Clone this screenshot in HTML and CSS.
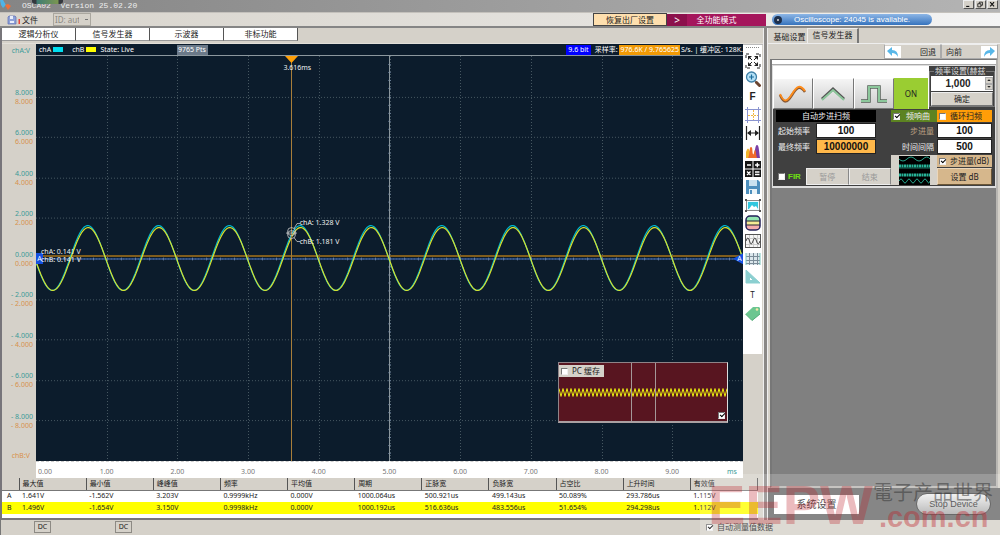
FILE: index.html
```html
<!DOCTYPE html>
<html lang="zh-CN">
<head>
<meta charset="UTF-8">
<meta name="viewport" content="width=device-width, initial-scale=1.0">
<title>OSCA02 Version 25.02.20</title>
<link rel="stylesheet" href="styles.css">
</head>
<body>
<div class="app">

<header class="titlebar">
    <svg class="logo" viewBox="0 0 12 11"><path d="M0 0h3l3 5-3 3-2-3z" fill="#4fb4e8"/><path d="M5 5l3-1 3 2-3 4z" fill="#f0703a"/></svg>
    <h1>OSCA02 &nbsp;Version 25.02.20</h1>
    <span class="notch"></span>
    <div class="win-buttons">
        <button aria-label="Minimize"><svg viewBox="0 0 10 9"><path d="M2 7h4" stroke="#111" stroke-width="1.5"/></svg></button>
        <button aria-label="Restore"><svg viewBox="0 0 10 9"><path d="M3.500 3.500v-2h4v4h-2M1.500 3.500h4v4h-4z" fill="none" stroke="#111"/></svg></button>
        <button aria-label="Close"><svg viewBox="0 0 10 9"><path d="M2 1.500l5 5.500M7 1.500L2 7" stroke="#111" stroke-width="1.500"/></svg></button>
    </div>
</header>

<nav class="menubar">
    <button class="file-menu"><svg viewBox="0 0 14 10"><path d="M2 1h6l1 1v7H1V2z" fill="#8fa2d8" stroke="#5b6fb5" stroke-width=".7"/><path d="M3 1h3v3H3zM3 6h4v2H3z" fill="#e8edfb"/><path d="M11.500 4h1.500v5h-1.500z" fill="#e8443c"/></svg>文件</button>
    <select class="device-id" aria-label="Device ID" disabled><option>ID: auto</option></select>
    <button class="reset">恢复出厂设置</button>
    <button class="mode"><span class="mode-arrow">&gt;</span><span class="mode-text">全功能模式</span></button>
    <div class="notice"><span class="notice-dot"></span>Oscilloscope: 24045 is available.</div>
</nav>

<main class="workspace">
<section class="left">
    <div class="view-tabs">
        <button>逻辑分析仪</button>
        <button>信号发生器</button>
        <button>示波器</button>
        <button>非标功能</button>
    </div>

    <div class="scope">
        <div class="y-axis">
            <span class="unit-a">chA:V</span>
            <div class="y-labels">
                <div class="edge"></div>
                <div class="tick"><span>8.000</span><span>8.000</span></div>
                <div class="tick"><span>6.000</span><span>6.000</span></div>
                <div class="tick"><span>4.000</span><span>4.000</span></div>
                <div class="tick"><span>2.000</span><span>2.000</span></div>
                <div class="tick"><span>0.000</span><span>0.000</span></div>
                <div class="tick"><span>- 2.000</span><span>- 2.000</span></div>
                <div class="tick"><span>- 4.000</span><span>- 4.000</span></div>
                <div class="tick"><span>- 6.000</span><span>- 6.000</span></div>
                <div class="tick"><span>- 8.000</span><span>- 8.000</span></div>
                <div class="edge unit-b">chB:V</div>
            </div>
        </div>

        <div class="chart">
            <div class="chart-head">
                <span>chA</span><i class="swatch cyan"></i>
                <span class="ch-b">chB</span><i class="swatch yellow"></i>
                <span>State: Live</span>
                <span class="points">9765 Pts</span>
                <span class="bits">9.6 bit</span>
                <span>采样率:</span>
                <span class="rate">976.6K / 9.765625</span>
                <span>S/s. | 缓冲区: 128K.</span>
            </div>
            <div class="plot">
                <svg class="plot-svg" viewBox="0 0 707 406" preserveAspectRatio="none">
                    <g id="grid"></g>
                    <path d="M0 200.500H707" class="level-b"/>
                    <path d="M0 203.500H707" class="level-a"/>
                    <path id="axisTicks" class="axis-ticks"/>
                    <path d="M353.500 0V406" class="mid"/>
                    <path id="waveA" class="wave wave-a"/>
                    <path id="waveB" class="wave wave-b"/>
                    <path d="M255.500 0V406" class="cursor"/>
                    <path d="M249 0h13l-6.500 7z" fill="#ffa008"/>
                    <g class="probe">
                        <circle cx="255.500" cy="176" r="4"/><circle cx="255.500" cy="179" r="4"/>
                        <path d="M250 177.500h11M258 173l3-5h3M258 182l3 4h3"/>
                    </g>
                </svg>
                <span class="note cursor-time">3.616ms</span>
                <span class="note probe-a">chA: 1.328 V</span>
                <span class="note probe-b">chB: 1.181 V</span>
                <span class="marker marker-left">A</span>
                <span class="marker marker-right">A</span>
                <span class="note level-text-a">chA: 0.141 V</span>
                <span class="note level-text-b">chB: 0.141 V</span>
                <div class="buffer">
                    <svg viewBox="0 0 168 59" preserveAspectRatio="none">
                        <path id="bufferWave" class="buffer-wave"/>
                        <path d="M72.500 0v59M96.500 0v59" stroke="#a59a9a"/>
                    </svg>
                    <label class="buffer-label"><input type="checkbox">PC 缓存</label>
                    <input type="checkbox" class="buffer-show" aria-label="Show buffer" checked>
                </div>
            </div>
            <div class="x-axis">
                <span class="first">0.00</span><span>1.00</span><span>2.00</span><span>3.00</span><span>4.00</span><span>5.00</span><span>6.00</span><span>7.00</span><span>8.00</span><span>9.00</span><span class="last">ms</span>
            </div>
        </div>

        <aside class="tools">
            <div class="tool-list">
                <i class="grip"></i>
                <button aria-label="Fit"><svg viewBox="0 0 16 16"><path d="M1 5V1h4M11 1h4v4M15 11v4h-4M5 15H1v-4" fill="none" stroke="#222" stroke-dasharray="3 1"/><path d="M3 3l10 10M13 3L3 13" stroke="#222"/><path d="M3 3h4L3 7zM13 3v4L9 3zM13 13H9l4-4zM3 13V9l4 4z" fill="#222"/><circle cx="8" cy="8" r="1.500" fill="#fff"/></svg></button>
                <button aria-label="Zoom"><svg viewBox="0 0 16 16"><path d="M10 10l2 2" stroke="#888" stroke-width="2"/><path d="M11.500 11.500l3 3" stroke="#6b4430" stroke-width="3" stroke-linecap="round"/><circle cx="6.500" cy="6" r="5" fill="#b5e1f7" stroke="#3e7fa6" stroke-width="1.300"/><path d="M4 6h5M6.500 3.500v5" stroke="#1b6c9c" stroke-width="1.200"/></svg></button>
                <button class="letter bold">F</button>
                <button aria-label="Cursors"><svg viewBox="0 0 16 16"><path d="M2.500 0v16M13.500 0v16M0 2.500h16M0 13.500h16" stroke="#8a94d0"/><path d="M8.500 3v10M3 8.500h10" stroke="#f0b840" stroke-dasharray="2 1"/></svg></button>
                <button aria-label="Width"><svg viewBox="0 0 16 16"><path d="M1.500 1v14M14.500 1v14M3 8h10" stroke="#222" stroke-width="1.200"/><path d="M2 8l4-3v6zM14 8l-4-3v6z" fill="#222"/></svg></button>
                <button aria-label="Spectrum"><svg viewBox="0 0 16 16"><path d="M1 15V9q2-7 4 0v6z" fill="#f0b52c"/><path d="M9 15C10 9 10 2 12 2s2 6 3 13z" fill="#7b3fa5"/><path d="M3 15c2-3 1-11 3-11s1 5 2 7 1-4 2-4 1 5 2 8z" fill="#ef6a2b"/></svg></button>
                <button aria-label="Math"><svg viewBox="0 0 16 16"><path d="M0 0h7.500v7.500H0zM8.500 0H16v7.500H8.500zM0 8.500h7.500V16H0zM8.500 8.500H16V16H8.500z" fill="#151515"/><path d="M2 4h4M10 4h4.500M12.300 1.700v4.500M2 10.500l3.500 3.500M5.500 10.500L2 14M10 11h4.500M10 13.500h4.500" stroke="#fff" stroke-width="1.300"/></svg></button>
                <button aria-label="Save"><svg viewBox="0 0 16 16"><path d="M1 1h12l2 2v12H1z" fill="#4d8fbd"/><path d="M4 1h8v6H4z" fill="#c9e2f0"/><path d="M4 10h8v5H4z" fill="#e8f3f8"/><path d="M5 11h2v4H5z" fill="#4d8fbd"/></svg></button>
                <button aria-label="Picture"><svg viewBox="0 0 16 16"><path d="M1.500 3.500h13v10h-13z" fill="#e9fbff" stroke="#888"/><path d="M3 5h10v7H3z" fill="#30c7df"/><path d="M4 12l3-4 2 2 2-1 2 3z" fill="#fff"/><path d="M0 2h2v2H0zM14 2h2v2h-2zM0 13h2v2H0zM14 13h2v2h-2z" fill="#555"/></svg></button>
                <button aria-label="Colours"><svg viewBox="0 0 16 16"><path d="M1 5q0-4 4-4h6q4 0 4 4v1H1z" fill="#95e5b2"/><path d="M1 6h14v4H1z" fill="#f5eb94"/><path d="M1 10h14v1q0 4-4 4H5q-4 0-4-4z" fill="#f5acac"/><path d="M1 6h14M1 10h14" stroke="#223"/><rect x="1" y="1" width="14" height="14" rx="4" fill="none" stroke="#232158" stroke-width="1.500"/></svg></button>
                <button aria-label="Wave"><svg viewBox="0 0 16 16"><rect x=".5" y="1.500" width="15" height="13" fill="#f5f5f5" stroke="#555"/><path d="M4.500 2v12M8.500 2v12M12.500 2v12M1 5.500h14M1 11.500h14" stroke="#ccc"/><path d="M1 8q2-6 3.500 0t3.500 0 3.500 0 3.500 0" fill="none" stroke="#444"/></svg></button>
                <button aria-label="Table"><svg viewBox="0 0 16 16"><path d="M1 2h14v12H1z" fill="#dce7ec"/><path d="M4.500 2v12M8.500 2v12M12.500 2v12M1 5.500h14M1 9.500h14M1 12.500h14" stroke="#7b8c98"/><path d="M1 2v12M15 2v12" stroke="#79c5bd"/></svg></button>
                <button aria-label="Triangle"><svg viewBox="0 0 16 16"><path d="M1 1v13h14zM4.500 7.500v4h4z" fill="#8bcfd0" fill-rule="evenodd" stroke="#8bcfd0"/></svg></button>
                <button class="letter">T</button>
                <button aria-label="Tag"><svg viewBox="0 0 16 16"><path d="M8 2h6l1 1v6l-7 6-1 .500L.500 9z" fill="#6cc690"/><path d="M.500 9L7 15.500l8-6.500" fill="none" stroke="#55ad79"/><circle cx="12" cy="4.500" r="1.300" fill="#f2e7a8"/></svg></button>
            </div>
        </aside>
    </div>

    <div class="measure-wrap">
        <table class="measure">
            <thead>
                <tr><th class="ch"></th><th>最大值</th><th>最小值</th><th>峰峰值</th><th>频率</th><th>平均值</th><th>周期</th><th>正脉宽</th><th>负脉宽</th><th>占空比</th><th>上升时间</th><th>有效值</th></tr>
            </thead>
            <tbody>
                <tr><td>A</td><td>1.641V</td><td>-1.562V</td><td>3.203V</td><td>0.9999kHz</td><td>0.000V</td><td>1000.064us</td><td>500.921us</td><td>499.143us</td><td>50.089%</td><td>293.786us</td><td>1.115V</td></tr>
                <tr class="row-b"><td>B</td><td>1.496V</td><td>-1.654V</td><td>3.150V</td><td>0.9998kHz</td><td>0.000V</td><td>1000.192us</td><td>516.636us</td><td>483.556us</td><td>51.654%</td><td>294.298us</td><td>1.112V</td></tr>
            </tbody>
        </table>
    </div>
</section>

<section class="right">
    <div class="side-tabs">
        <button>基础设置</button>
        <button class="active">信号发生器</button>
    </div>
    <div class="history">
        <button><svg viewBox="0 0 16 12"><path d="M2 5l5-4v3q6 0 6 7-2-4-6-4v3z" fill="#58b7e8"/></svg><span>回退</span></button>
        <button><span>向前</span><svg viewBox="0 0 16 12"><path d="M14 5L9 1v3q-6 0-6 7 2-4 6-4v3z" fill="#58b7e8"/></svg></button>
    </div>

    <div class="side-body">
        <div class="strip"></div>
        <div class="generator">
            <div class="wave-row">
                <div class="wave-buttons">
                    <button aria-label="Sine"><svg viewBox="0 0 30 22"><path d="M2 12c4 9 7 8 12 0s8-10 13-3" fill="none" stroke="#8a5a35" stroke-width="2.500"/><path d="M2 11c4 9 7 8 12 0s8-10 13-3" fill="none" stroke="#ff8c1a" stroke-width="1.800"/></svg></button>
                    <button aria-label="Triangle"><svg viewBox="0 0 30 22"><path d="M4 16L15 6l11 10" fill="none" stroke="#555" stroke-width="3"/><path d="M4 17L15 7l11 10" fill="none" stroke="#8cc79b" stroke-width="2"/></svg></button>
                    <button aria-label="Square"><svg viewBox="0 0 30 22"><path d="M2 18h8V4h10v14h8" fill="none" stroke="#556058" stroke-width="3.500"/><path d="M2 18h8V4h10v14h8" fill="none" stroke="#8cc79b" stroke-width="2"/></svg></button>
                    <button class="on">ON</button>
                </div>
                <div class="freq-wrap">
                    <fieldset class="freq">
                        <legend>频率设置(赫兹</legend>
                        <div class="spin">
                            <input type="text" value="1,000" aria-label="频率设置(赫兹">
                            <div class="spin-buttons"><button aria-label="Up"><i class="up"></i></button><button aria-label="Down"><i class="down"></i></button></div>
                        </div>
                        <button class="ok">确定</button>
                    </fieldset>
                </div>
            </div>

            <div class="sweep">
                <span class="sweep-title">自动步进扫频</span>
                <label class="response"><input type="checkbox" checked>频响曲</label>
                <label class="loop"><input type="checkbox">循环扫频</label>

                <label for="startFreq">起始频率</label>
                <input type="text" id="startFreq" class="num" value="100">
                <label for="stepSize" class="step-label">步进量</label>
                <input type="text" id="stepSize" class="num" value="100">

                <label for="endFreq">最终频率</label>
                <input type="text" id="endFreq" class="num amber" value="10000000">
                <label for="interval" class="interval-label">时间间隔</label>
                <input type="text" id="interval" class="num" value="500">

                <label class="fir"><input type="checkbox">FIR</label>
                <div class="run"><button disabled>暂停</button><button disabled>结束</button></div>
                <button class="thumb" aria-label="Response curve">
                    <svg viewBox="0 0 31 29"><path d="M0 0h31v29H0z" fill="#000"/><path d="M0 3q4 4 8 0t8 0 8 0 7 0M0 25q2-4 4 0t4 0 4 0 4 0 4 0 4 0 4 0 3 0" fill="none" stroke="#27a58c"/><path d="M0 10h31M0 19h31" stroke="#27b397" stroke-width="3" stroke-dasharray="2 .5"/><path d="M0 12h31" stroke="#1a7767"/></svg>
                </button>
                <label class="step-db"><input type="checkbox" checked>步进量(dB)</label>
                <button class="set-db">设置 dB</button>
            </div>
        </div>
    </div>

    <div class="actions">
        <button class="system">系统设置</button>
        <button class="stop">Stop Device</button>
    </div>
</section>
</main>

<footer class="status">
    <button>DC</button>
    <button>DC</button>
    <label><input type="checkbox" checked>自动测量值数据</label>
</footer>

<div class="brand">
    <span class="brand-name">EEPW</span>
    <div class="brand-side"><span class="brand-cn">電子产品世界</span><span class="brand-url">.com.cn</span></div>
</div>

</div>
<script src="script.js"></script>
</body>
</html>
```

FILE: styles.css
```css
* {
    box-sizing: border-box;
}
body {
    margin: 0;
    background-color: #d5d1c9;
    color: #222;
    font-family: "Noto Sans", "Noto Sans CJK SC", sans-serif;
    font-size: 8px;
    line-height: 10px;
}
button, input, select {
    margin: 0;
    padding: 0;
    border: none;
    border-radius: 0;
    color: inherit;
    font: inherit;
}
button {
    white-space: nowrap;
}
svg {
    display: block;
}
input[type="checkbox"] {
    appearance: none;
    position: relative;
    flex: none;
    width: 7px;
    height: 7px;
    border: 1px solid #777;
    border-right-color: #eee;
    border-bottom-color: #eee;
    background-color: #fff;
}
input[type="checkbox"]:checked::after {
    content: "";
    position: absolute;
    left: 1px;
    top: 0;
    width: 4px;
    height: 2px;
    border-left: 1px solid #000;
    border-bottom: 1px solid #000;
    transform: rotate(-45deg);
}
.app {
    position: relative;
    display: flex;
    flex-direction: column;
    min-height: 100vh;
    overflow: hidden;
}

/* title and menu */
.titlebar {
    position: relative;
    display: flex;
    height: 12px;
    background: linear-gradient(90deg, #858585, #b4b4b4);
}
.logo {
    width: 12px;
    height: 11px;
}
.titlebar h1 {
    margin: 0 0 0 10px;
    color: #eee;
    font-family: "Liberation Mono", monospace;
    font-size: 8px;
    font-weight: normal;
    line-height: 11px;
}
.notch {
    position: absolute;
    left: 32px;
    top: 0;
    width: 31px;
    height: 4px;
    border-radius: 0 0 3px 3px;
    background: linear-gradient(90deg, #34383e 4px, #3e7d74 5px, #7b9651 26px, #34383e 27px);
}
.win-buttons {
    display: flex;
    gap: 1px;
    margin-left: auto;
    padding-right: 2px;
}
.win-buttons button {
    width: 11px;
    height: 9px;
    border: 1px solid #eee;
    border-right-color: #555;
    border-bottom-color: #555;
    background-color: #d5d1c9;
}
.win-buttons svg {
    width: 9px;
    height: 7px;
}
.menubar {
    display: flex;
    align-items: center;
    height: 16px;
    border-top: 1px solid #c4c1bc;
    border-bottom: 2px solid #858585;
    background: linear-gradient(90deg, #d8d4cc, #e4e2de 60%, #f4f4f4);
}
.file-menu {
    display: flex;
    gap: 1px;
    margin-left: 7px;
    background: none;
}
.file-menu svg {
    width: 14px;
    height: 10px;
}
.device-id {
    appearance: none;
    width: 38px;
    height: 13px;
    margin: 0 auto 0 15px;
    padding: 0 11px 0 1px;
    border: 1px solid #aaa79f;
    background: linear-gradient(#777, #777) 31px 5px / 3px 1px no-repeat, #d5d1c9;
    color: #8b8983;
    opacity: 1;
}
.reset {
    width: 74px;
    height: 13px;
    border: 1px solid #444;
    background-color: #fedfae;
}
.mode {
    display: flex;
    width: 99px;
    height: 12px;
    margin-right: 6px;
    background-color: #a5165c;
    color: #fff;
    line-height: 12px;
}
.mode-arrow {
    width: 20px;
    background-color: #8c104c;
    font-size: 10px;
}
.mode-text {
    flex: 1;
    padding-right: 20px;
    text-align: center;
}
.notice {
    display: flex;
    align-items: center;
    width: 160px;
    height: 11px;
    margin-right: 68px;
    border-radius: 6px;
    background: linear-gradient(#8db6e6, #3673bd);
    color: #fff;
    font-family: "Liberation Sans", sans-serif;
    white-space: nowrap;
}
.notice-dot {
    width: 8px;
    height: 8px;
    margin: 0 12px 0 2px;
    border: 3px solid #1d2f4c;
    border-radius: 50%;
    background-color: #ddd;
}

/* left side */
.workspace {
    display: flex;
    flex: 1;
}
.left {
    display: flex;
    flex: 1;
    flex-direction: column;
    min-width: 0;
    border-left: 2px solid #77757a;
}
.view-tabs {
    display: flex;
    height: 16px;
    padding-bottom: 2px;
    border-bottom: 1px solid #e2dfd9;
}
.view-tabs button {
    width: 74px;
    border-right: 1px solid #555;
    border-bottom: 1px solid #999;
    background-color: #fff;
}
.scope {
    display: flex;
    flex: 1;
}
.y-axis {
    display: flex;
    flex-direction: column;
    width: 34px;
    padding-bottom: 17px;
    font-size: 7px;
    text-align: right;
}
.unit-a {
    height: 12px;
    padding-right: 6px;
    color: #3a9b98;
    line-height: 13px;
}
.y-labels {
    display: flex;
    flex: 1;
    flex-direction: column;
}
.edge {
    flex: 1;
}
.unit-b {
    display: flex;
    align-items: flex-end;
    justify-content: flex-end;
    padding-right: 6px;
    color: #d8924d;
}
.tick {
    display: flex;
    flex: 2;
    flex-direction: column;
    justify-content: center;
    padding-right: 3px;
    color: #3a9b98;
    line-height: 9px;
}
.tick span + span {
    color: #d8924d;
}
.chart {
    display: flex;
    flex: 1;
    flex-direction: column;
    min-width: 0;
}
.chart-head {
    display: flex;
    align-items: center;
    height: 12px;
    padding-left: 3px;
    border-bottom: 1px solid #8c979e;
    background-color: #0c1c2c;
    color: #fff;
    font-size: 7px;
    white-space: nowrap;
}
.swatch {
    width: 10px;
    height: 5px;
    margin: 0 5px 0 2px;
}
.cyan {
    background-color: #00dff0;
}
.yellow {
    background-color: #ff0;
}
.ch-b {
    margin-left: 4px;
}
.swatch.yellow {
    margin-right: 4px;
}
.points {
    margin-left: 43px;
    padding: 0 2px 0 1px;
    background-color: #6b7989;
}
.bits {
    margin: 0 4px 0 auto;
    padding: 0 2px;
    background-color: #00f;
}
.rate {
    margin: 0 1px 0 1px;
    padding: 0 1px 0 2px;
    background-color: #f29a05;
}
.plot {
    position: relative;
    flex: 1;
    background-color: #0c1c2c;
}
.plot-svg {
    position: absolute;
    width: 100%;
    height: 100%;
}
.plot-svg path {
    vector-effect: non-scaling-stroke;
}
.grid-line {
    stroke: #465761;
    stroke-dasharray: 1 2;
}
.mid {
    stroke: #8b969c;
}
.level-b {
    stroke: #805d1d;
    stroke-width: 2;
}
.level-a {
    stroke: #4a78c8;
}
.axis-ticks {
    stroke: #8fa4c8;
    stroke-width: .5;
}
.wave {
    fill: none;
    stroke-width: 1.2;
}
.wave-a {
    stroke: #00b8cc;
}
.wave-b {
    stroke: #d8e02c;
}
.cursor {
    stroke: #a87e3a;
}
.probe {
    fill: none;
    stroke: #ccc;
    stroke-width: .8;
}
.note {
    position: absolute;
    color: #f0f0f0;
    font-size: 7px;
    line-height: 8px;
    white-space: nowrap;
}
.cursor-time {
    left: 35%;
    top: 2%;
}
.probe-a {
    left: 37.3%;
    top: 40.3%;
}
.probe-b {
    left: 37.3%;
    top: 45%;
}
.level-text-a {
    left: 5px;
    top: 47.5%;
}
.level-text-b {
    left: 5px;
    top: 49.5%;
}
.marker {
    position: absolute;
    top: 48.7%;
    width: 7px;
    height: 11px;
    background-color: #1550e0;
    color: #fff;
    font-size: 7px;
    line-height: 11px;
    text-align: center;
}
.marker-left {
    left: 0;
}
.marker-right {
    right: 0;
    width: 10px;
    padding-left: 3px;
    clip-path: polygon(0 50%, 100% 0, 100% 100%);
}
.buffer {
    position: absolute;
    right: 15px;
    bottom: 38px;
    width: 170px;
    height: 61px;
    border: 1px solid #908488;
    border-right-color: #ddd;
    border-bottom: 2px solid #aaa0a2;
    background-color: #581520;
}
.buffer svg {
    width: 100%;
    height: 100%;
}
.buffer-wave {
    fill: none;
    stroke: #e9ec10;
}
.buffer-label {
    position: absolute;
    left: 0;
    top: 2px;
    display: flex;
    align-items: center;
    gap: 4px;
    height: 12px;
    padding: 0 4px 0 2px;
    background-color: #d5d1c9;
}
input.buffer-show {
    position: absolute;
    right: 2px;
    bottom: 2px;
}
.x-axis {
    display: flex;
    height: 17px;
    border-top: 1px dashed #ccc;
    background-color: #fff;
    color: #777;
    font-size: 7px;
    line-height: 19px;
}
.x-axis span {
    width: 10%;
    text-align: center;
}
.x-axis .first {
    width: 5%;
    padding-left: 2px;
    text-align: left;
}
.x-axis .last {
    width: 5%;
    padding-right: 6px;
    color: #3a9b98;
    text-align: right;
}
.tools {
    width: 20px;
    border-top: 1px solid #bbb;
}
.tool-list {
    display: flex;
    flex-direction: column;
    align-items: center;
    width: 19px;
    padding-bottom: 32px;
    background-color: #fff;
}
.grip {
    width: 13px;
    height: 5px;
    margin-top: 2px;
    border-top: 1px dotted #888;
}
.tool-list button {
    display: flex;
    align-items: center;
    justify-content: center;
    width: 18px;
    height: 18px;
    background: none;
}
.tool-list svg {
    width: 16px;
    height: 16px;
}
.tool-list .letter {
    font-size: 8px;
}
.tool-list .bold {
    font-family: "Liberation Sans", sans-serif;
    font-size: 10px;
    font-weight: bold;
}
.measure-wrap {
    height: 42px;
    margin-right: 5px;
    border-bottom: 2px solid #77757a;
    background-color: #fff;
}
.measure {
    width: 100%;
    border-collapse: collapse;
    table-layout: fixed;
    font-size: 7px;
    line-height: 10px;
}
.measure th {
    height: 12px;
    padding: 0 0 0 3px;
    border-right: 1px solid #555;
    border-bottom: 1px solid #777;
    background-color: #d5d1c9;
    font-weight: normal;
    text-align: left;
}
.measure .ch {
    width: 17px;
}
.measure td {
    height: 12px;
    padding: 0 0 0 3px;
    white-space: nowrap;
}
.measure td:first-child {
    padding-left: 5px;
}
.row-b {
    background-color: #ff0;
}

/* right side */
.right {
    display: flex;
    flex-direction: column;
    width: 237px;
    border-left: 1px solid #eee;
    box-shadow: inset 3px 0 #8a8886, inset 4px 0 #eee;
    padding-left: 4px;
}
.side-tabs {
    display: flex;
    align-items: flex-end;
    height: 16px;
    padding-left: 4px;
    border-bottom: 1px solid #eee;
}
.side-tabs button {
    width: 35px;
    height: 13px;
    background: none;
}
.side-tabs .active {
    width: 52px;
    height: 15px;
    padding-bottom: 2px;
    border-top: 1px solid #eee;
    border-left: 1px solid #eee;
    border-right: 2px solid #777;
}
.history {
    display: flex;
    justify-content: flex-end;
    height: 15px;
    padding-right: 2px;
}
.history button {
    display: flex;
    align-items: center;
    justify-content: space-between;
    width: 57px;
    border: 1px solid #aaa;
    border-top-color: #eee;
    background-color: #d5d1c9;
}
.history svg {
    width: 16px;
    height: 12px;
    background-color: #fff;
}
.history span {
    padding: 0 4px;
}
.side-body {
    flex: 1;
    margin: 0 2px 0 2px;
    border: 2px solid #b8b6b2;
    border-top: 1px solid #777;
    border-left-color: #777;
    background-color: #808080;
}
.strip {
    height: 5px;
    border-bottom: 1px solid #aaa;
    background-color: #fff;
}
.generator {
    border: 1px solid #ddd;
    border-bottom: 2px solid #ddd;
    background-color: #404040;
}
.wave-row {
    display: flex;
    height: 43px;
    background-color: #fff;
}
.wave-buttons {
    display: flex;
    flex: 1;
    align-items: flex-end;
    padding-right: 1px;
}
.wave-buttons button {
    display: flex;
    flex: 1;
    align-items: center;
    justify-content: center;
    height: 31px;
    border: 1px solid #fff;
    border-right-color: #777;
    border-bottom-color: #777;
    background: linear-gradient(#f5f5f5, #ccc);
}
.wave-buttons svg {
    width: 30px;
    height: 22px;
}
.wave-buttons .on {
    flex: 0 0 34px;
    border: none;
    background: #9acd32;
}
.freq-wrap {
    width: 66px;
    background-color: #404040;
}
.freq {
    min-width: 0;
    margin: 0;
    padding: 0 1px;
    border: 1px solid #777;
}
.freq legend {
    margin-left: 3px;
    padding: 0 1px;
    color: #ddd;
    white-space: nowrap;
}
.spin {
    display: flex;
    height: 15px;
    background-color: #fff;
}
.spin input {
    flex: 1;
    min-width: 0;
    font-family: "Liberation Sans", sans-serif;
    font-size: 10px;
    font-weight: bold;
    text-align: center;
}
.spin-buttons {
    display: flex;
    flex-direction: column;
    width: 8px;
    padding: 1px 0;
}
.spin-buttons button {
    display: flex;
    flex: 1;
    align-items: center;
    justify-content: center;
    border: 1px solid #aaa;
    background-color: #d5d1c9;
}
.up, .down {
    width: 4px;
    height: 2px;
    background-color: #222;
    clip-path: polygon(50% 0, 100% 100%, 0 100%);
}
.down {
    clip-path: polygon(0 0, 100% 0, 50% 100%);
}
.ok {
    display: block;
    width: 100%;
    height: 14px;
    margin-top: 1px;
    border: 1px solid #eee;
    border-right-color: #777;
    border-bottom-color: #777;
    background-color: #d5d1c9;
}
.sweep {
    display: grid;
    grid-template-columns: 30px 10px 60px 15px 46px 1fr;
    grid-template-rows: 12px 15px 15px 12px 17px;
    row-gap: 1px;
    padding: 1px 3px 1px 3px;
    color: #eee;
    white-space: nowrap;
}
.sweep > label {
    display: flex;
    align-items: center;
    grid-column: 1 / 3;
    padding-left: 2px;
}
.sweep .sweep-title {
    grid-column: 1 / 4;
    background-color: #000;
    line-height: 12px;
    text-align: center;
}
.sweep .response {
    grid-column: 5;
    justify-content: space-between;
    padding-right: 7px;
    background-color: #5c8321;
}
.sweep .loop {
    grid-column: 6;
    gap: 4px;
    background-color: #ff9d08;
    color: #222;
}
.num {
    grid-column: 3;
    min-width: 0;
    width: 100%;
    border: 1px solid #222;
    background-color: #fff;
    color: #111;
    font-family: "Liberation Sans", sans-serif;
    font-size: 10px;
    font-weight: bold;
    text-align: center;
}
.amber {
    background-color: #ffb84a;
}
.sweep .step-label, .sweep .interval-label {
    grid-column: 4 / 6;
    justify-content: flex-end;
    padding-right: 3px;
}
.sweep .step-label {
    color: #bca083;
}
#stepSize, #interval {
    grid-column: 6;
}
.sweep .fir {
    grid-area: 5 / 1 / 6 / 3;
    gap: 3px;
    color: #6ee010;
    font-family: "Liberation Sans", sans-serif;
    font-weight: bold;
}
.run {
    grid-area: 5 / 2 / 6 / 5;
    display: flex;
}
.run button {
    flex: 1;
    border: 1px solid #eee;
    border-right-color: #888;
    background-color: #d5d1c9;
    color: #999;
}
.thumb {
    grid-area: 4 / 5 / 6 / 6;
    padding: 0 0 0 8px;
    background-color: #d5d1c9;
}
.thumb svg {
    width: 31px;
    height: 29px;
}
.sweep .step-db {
    grid-area: 4 / 6;
    gap: 4px;
    background-color: #d6b78c;
    color: #222;
}
.set-db {
    grid-area: 5 / 6;
    border: 1px solid #ead7bd;
    border-right-color: #6b5636;
    border-bottom-color: #6b5636;
    background-color: #d6b78c;
    color: #222;
}
.actions {
    display: flex;
    align-items: center;
    justify-content: space-between;
    height: 32px;
    padding: 0 9px 0 6px;
    background-color: #686868;
}
.system {
    width: 85px;
    height: 19px;
    background-color: #fff;
    font-size: 10px;
}
.stop {
    width: 75px;
    height: 22px;
    border: 1px solid #444;
    border-radius: 11px;
    background: linear-gradient(#eee, #aaa);
    color: #333;
    font-family: "Liberation Sans", sans-serif;
    font-size: 9px;
}

/* status bar */
.status {
    display: flex;
    align-items: flex-start;
    height: 15px;
    padding: 1px 0 0 33px;
    border-left: 1px solid #777;
}
.status button {
    width: 17px;
    height: 12px;
    margin-right: 64px;
    border: 1px solid #8d8a84;
    background: none;
    font-size: 7px;
}
.status label {
    display: flex;
    align-items: center;
    gap: 4px;
    margin: 0 227px 0 auto;
    line-height: 12px;
}

/* brand overlay */
.brand {
    position: absolute;
    right: 0;
    bottom: 0;
    display: flex;
    align-items: center;
    width: 300px;
    height: 61px;
    padding-left: 8px;
    background-color: rgba(255, 255, 255, .2);
    font-family: "Liberation Sans", "Noto Sans CJK SC", sans-serif;
    font-weight: bold;
    pointer-events: none;
}
.brand-name {
    color: rgba(190, 30, 40, .3);
    font-size: 56px;
    line-height: 56px;
}
.brand-side {
    display: flex;
    flex-direction: column;
    padding-top: 4px;
    color: rgba(190, 30, 40, .4);
    white-space: nowrap;
}
.brand-cn {
    color: rgba(50, 50, 50, .5);
    font-size: 20px;
    font-weight: normal;
    line-height: 20px;
}
.brand-url {
    padding-left: 6px;
    font-size: 29px;
    line-height: 28px;
}
```

FILE: script.js
```js
const WIDTH = 707;
const HEIGHT = 406;
const PERIOD = 70.8;

function wavePath(center, amp, shift) {
    let d = '';
    for (let x = 0; x <= WIDTH; x++) {
        const y = center - amp * Math.sin(2 * Math.PI * (x - shift) / PERIOD);
        d += (x === 0 ? 'M' : 'L') + x + ' ' + y.toFixed(1);
    }
    return d;
}

function gridLine(d) {
    const line = document.createElementNS('http://www.w3.org/2000/svg', 'path');
    line.setAttribute('d', d);
    line.setAttribute('class', 'grid-line');
    document.getElementById('grid').appendChild(line);
}

for (let i = 1; i < 10; i++) {
    const x = Math.round(i * WIDTH / 10) + 0.5;
    const y = Math.round(i * HEIGHT / 10) + 0.5;
    gridLine(`M${x} 0V${HEIGHT}`);
    gridLine(`M0 ${y}H${WIDTH}`);
}

let ticks = '';
for (let i = 1; i < 50; i++) {
    ticks += `M${Math.round(i * WIDTH / 50) + 0.5} 202v3`;
    ticks += `M352 ${Math.round(i * HEIGHT / 50) + 0.5}h3`;
}
document.getElementById('axisTicks').setAttribute('d', ticks);

document.getElementById('waveA').setAttribute('d', wavePath(202.5, 32.5, 34));
document.getElementById('waveB').setAttribute('d', wavePath(203.5, 31.5, 34.5));

// capture buffer is far denser than the main trace, so draw it as a zigzag
let buffer = 'M0 26';
for (let x = 2; x <= 168; x += 2) {
    buffer += `L${x} ${x % 4 ? 34 : 26}`;
}
document.getElementById('bufferWave').setAttribute('d', buffer);
```
